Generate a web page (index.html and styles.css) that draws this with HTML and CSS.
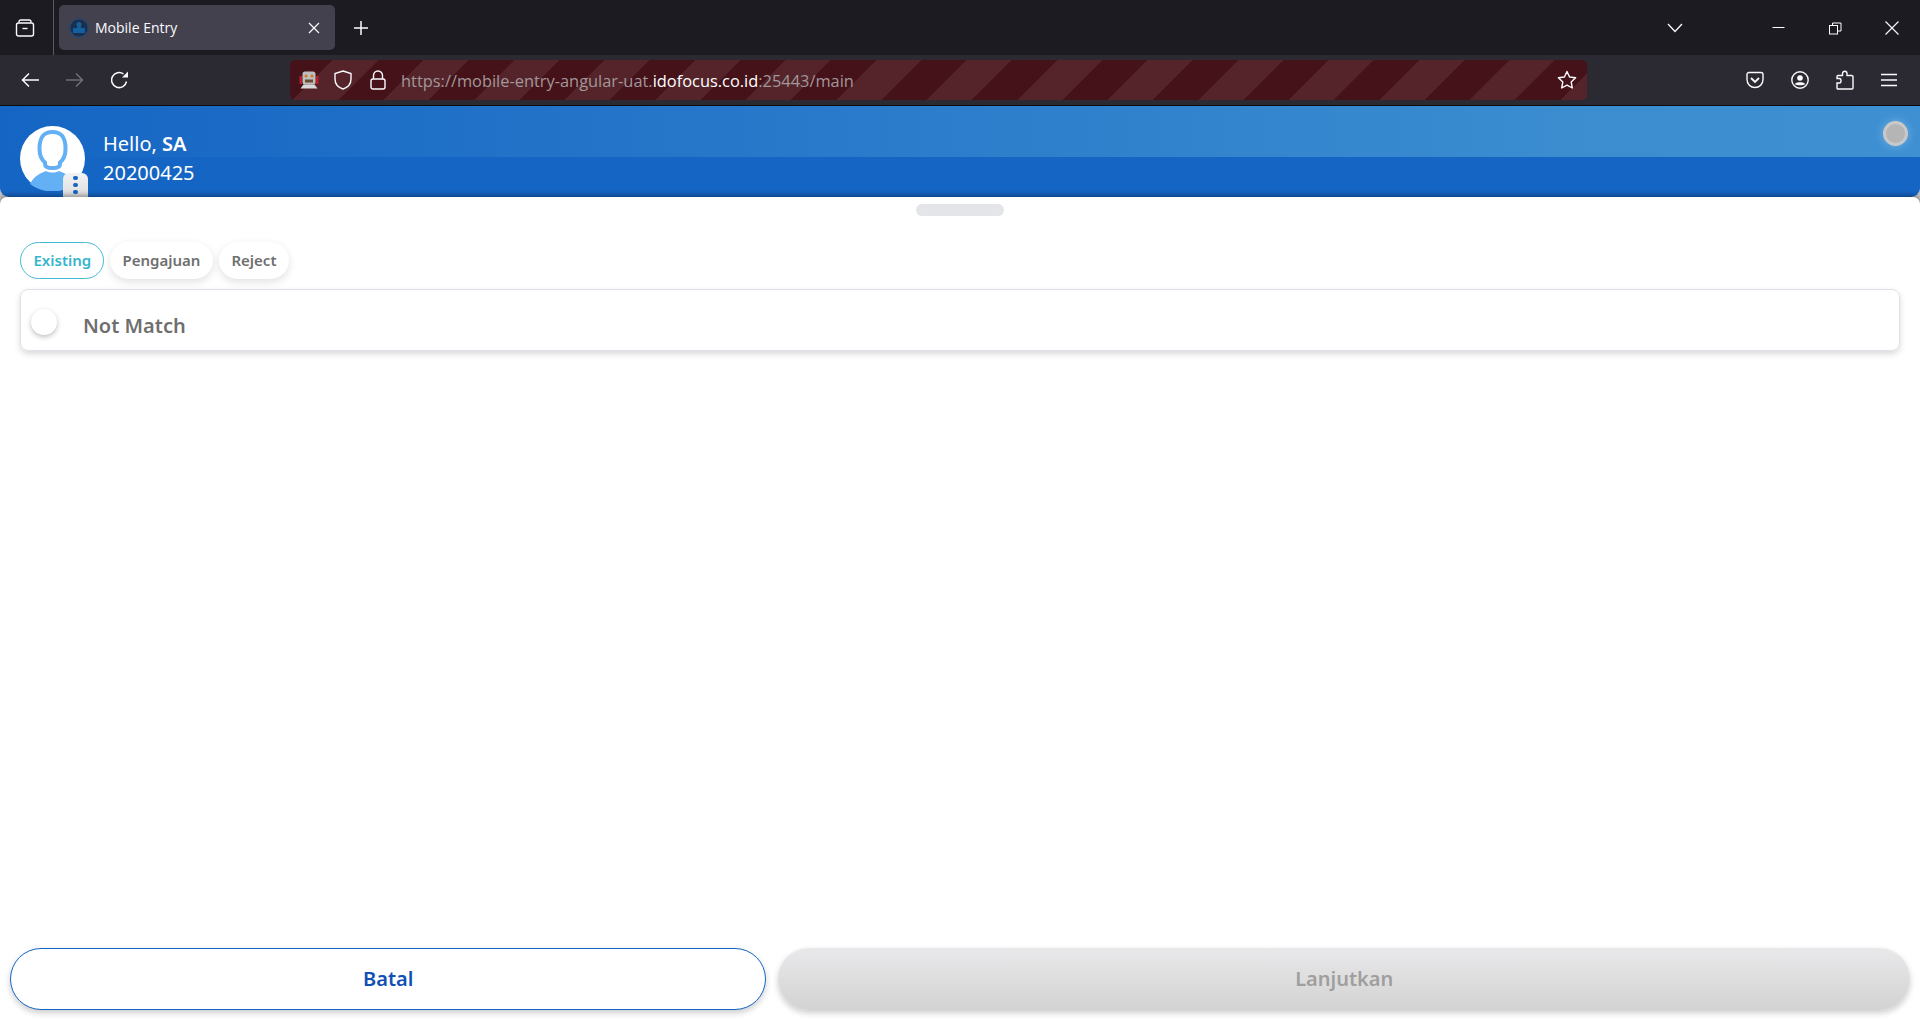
FILE: index.html
```html
<!DOCTYPE html>
<html>
<head>
  <title>Mobile Entry</title>
  <link rel="stylesheet" href="styles.css">
</head>
<body>
  <!-- browser chrome -->
  <div class="tabbar">
    <div class="tab-list-btn">
      <svg width="20" height="20" viewBox="0 0 20 20" fill="none" stroke="#fbfbfe" stroke-width="1.4"><path d="M4 4.5V3.800C4 2.800 4.800 2 5.800 2H14.200C15.200 2 16 2.800 16 3.800V4.500"/><rect x="1.500" y="5" width="17" height="13" rx="2"/><path d="M7.500 10.500H12.500"/></svg>
    </div>
    <div class="tab">
      <svg class="favicon" width="20" height="20" viewBox="0 0 20 20"><circle cx="10" cy="10" r="9" fill="#1c2f4a" stroke="#134a88"/><circle cx="10" cy="6.500" r="2.500" fill="#14609f"/><path d="M4 15V10H8V8.500H12V10H16V15Z" fill="#14609f"/></svg>
      <span class="tab-title">Mobile Entry</span>
      <svg class="tab-close" width="12" height="12" viewBox="0 0 12 12" stroke="#fbfbfe" stroke-width="1.200"><path d="M1 1L11 11M11 1L1 11"/></svg>
    </div>
    <svg class="new-tab" width="16" height="16" viewBox="0 0 16 16" stroke="#fbfbfe" stroke-width="1.500"><path d="M8 1V15M1 8H15"/></svg>
    <div class="tabbar-right">
      <svg class="all-tabs" width="16" height="10" viewBox="0 0 16 10" fill="none" stroke="#fbfbfe" stroke-width="1.300"><path d="M1 1L8 8.500L15 1"/></svg>
      <div class="win-btn"><svg width="13" height="13" viewBox="0 0 13 13" stroke="#fbfbfe"><path d="M0.500 5.500H12.500"/></svg></div>
      <div class="win-btn"><svg width="13" height="13" viewBox="0 0 13 13" fill="none" stroke="#fbfbfe"><rect x="0.500" y="3.500" width="8" height="8.500"/><path d="M3.500 3.500V1H12V9H8.500"/></svg></div>
      <div class="win-btn"><svg width="14" height="14" viewBox="0 0 14 14" stroke="#fbfbfe" stroke-width="1.100"><path d="M0.500 0.500L13.500 13.500M13.500 0.500L0.500 13.500"/></svg></div>
    </div>
  </div>

  <div class="navbar">
    <svg class="nav-icon" width="18" height="16" viewBox="0 0 18 16" fill="none" stroke="#fbfbfe" stroke-width="1.500"><path d="M18 8H2M8 1.500L1.500 8L8 14.500"/></svg>
    <svg class="nav-icon fwd" width="18" height="16" viewBox="0 0 18 16" fill="none" stroke="#6f6e75" stroke-width="1.500"><path d="M0 8H16M10 1.500L16.500 8L10 14.500"/></svg>
    <svg class="nav-icon reload" width="18" height="18" viewBox="0 0 18 18" fill="none" stroke="#fbfbfe" stroke-width="1.500"><path d="M15.500 10.500A7.500 7.500 0 1 1 12.500 3"/><path d="M17 0.500V6.500H11Z" fill="#fbfbfe" stroke="none"/></svg>

    <div class="urlbar">
      <svg class="robot" width="20" height="20" viewBox="0 0 20 20"><path d="M0.500 6H3V14H0.500ZM17 6H19.500V14H17Z" fill="#b3202c"/><rect x="3.500" y="1.500" width="13" height="13" rx="2.500" fill="#bdbdbd"/><circle cx="7" cy="6" r="1.500" fill="#d9761f"/><circle cx="13" cy="6" r="1.500" fill="#d9761f"/><rect x="6" y="9.500" width="8" height="3" fill="#6b4a30"/><path d="M1.500 18.500L4.500 14.500H15.500L18.500 18.500Z" fill="#d8d8d8"/></svg>
      <svg class="shield" width="18" height="20" viewBox="0 0 18 20" fill="none" stroke="#fbfbfe" stroke-width="1.400"><path d="M9 1L17 3.500V9C17 14 13.500 17.500 9 19C4.500 17.500 1 14 1 9V3.500Z"/></svg>
      <svg class="lock" width="16" height="20" viewBox="0 0 16 20" fill="none" stroke="#fbfbfe" stroke-width="1.400"><rect x="1" y="9" width="14" height="10" rx="2"/><path d="M3.500 9V5.500A4.500 4.500 0 0 1 12.500 5.500V9"/></svg>
      <span class="url">https://mobile-entry-angular-uat.<b>idofocus.co.id</b>:25443/main</span>
      <svg class="star" width="20" height="20" viewBox="0 0 20 20" fill="none" stroke="#fbfbfe" stroke-width="1.400" stroke-linejoin="round"><path d="M10 1.500L12.600 7L18.600 7.800L14.200 12L15.300 18L10 15.100L4.700 18L5.800 12L1.400 7.800L7.400 7Z"/></svg>
    </div>

    <div class="nav-right">
      <svg width="18" height="18" viewBox="0 0 18 18" fill="none" stroke="#fbfbfe" stroke-width="1.400"><path d="M1 3.500C1 2.500 1.700 1.500 3 1.500H15C16.300 1.500 17 2.500 17 3.500V8.500C17 13 13.500 16.500 9 16.500C4.500 16.500 1 13 1 8.500Z"/><path d="M5 7L9 11L13 7" stroke-width="1.800"/></svg>
      <svg width="18" height="18" viewBox="0 0 18 18" fill="none" stroke="#fbfbfe" stroke-width="1.400"><circle cx="9" cy="9" r="8.200"/><circle cx="9" cy="7" r="2.800" fill="#fbfbfe" stroke="none"/><path d="M3.800 13C5 10.800 13 10.800 14.200 13C13 14.800 5 14.800 3.800 13Z" fill="#fbfbfe" stroke="none"/></svg>
      <svg width="18" height="20" viewBox="0 0 18 20" fill="none" stroke="#fbfbfe" stroke-width="1.400"><path d="M1 13H3.500C5.500 13 5.500 8.500 3.500 8.500H1V6.500C1 6 1.500 5.500 2 5.500H6.500V3.500C6.500 0.500 11 0.500 11 3.500V5.500H15.500C16.200 5.500 17 6 17 6.500V18C17 18.500 16.500 19 16 19H2C1.500 19 1 18.500 1 18Z"/></svg>
      <svg width="16" height="14" viewBox="0 0 16 14" stroke="#fbfbfe" stroke-width="1.400"><path d="M0 1.500H16M0 7H16M0 12.500H16"/></svg>
    </div>
  </div>

  <!-- app -->
  <div class="app">
    <header class="app-header">
      <div class="header-band"></div>
      <div class="avatar-wrap">
        <svg class="avatar" width="65" height="65" viewBox="0 0 65 65">
          <circle cx="32.500" cy="32.500" r="32.500" fill="#fff"/>
          <path d="M10 58C14 49 22 47 26 45C30 47 35 47 39 45C43 47 51 49 55 58C42 68 23 68 10 58Z" fill="#64b0f4"/>
          <path d="M32.500 6C21.500 6 19.500 14 19.500 23C19.500 30 22 34 25 36.500V38C25 41 28 42 32.500 42C37 42 40 41 40 38V36.500C43 34 45.500 30 45.500 23C45.500 14 43.500 6 32.500 6Z" fill="#fff" stroke="#64b0f4" stroke-width="4"/>
        </svg>
        <div class="avatar-menu"><i></i><i></i><i></i></div>
      </div>
      <div class="user-info">
        <div class="hello">Hello, <b>SA</b></div>
        <div class="nik">20200425</div>
      </div>
      <div class="status-dot"></div>
    </header>

    <main class="sheet">
      <div class="handle"></div>
      <div class="chips">
        <button class="chip chip-active">Existing</button>
        <button class="chip">Pengajuan</button>
        <button class="chip">Reject</button>
      </div>
      <div class="option-card">
        <span class="radio"></span>
        <span class="option-label">Not Match</span>
      </div>
      <div class="actions">
        <button class="btn btn-cancel">Batal</button>
        <button class="btn btn-next">Lanjutkan</button>
      </div>
    </main>
  </div>
</body>
</html>
```

FILE: styles.css
```css
* {
  box-sizing: border-box;
}

body {
  display: flex;
  flex-direction: column;
  height: 100vh;
  margin: 0;
  overflow: hidden;
  background: #fff;
  font-family: 'Noto Sans', sans-serif;
}

svg {
  display: block;
  flex-shrink: 0;
}

/* Browser chrome */
.tabbar {
  display: flex;
  align-items: center;
  height: 55px;
  background: #1c1b22;
  font-family: 'Open Sans', sans-serif;
}

.tab-list-btn {
  display: flex;
  align-items: center;
  justify-content: center;
  width: 54px;
  height: 100%;
  padding-right: 4px;
  border-right: 1px solid #5a5960;
}

.tab {
  display: flex;
  align-items: center;
  width: 276px;
  height: 45px;
  margin-left: 5px;
  padding: 0 15px 0 10px;
  background: #42414d;
  border-radius: 5px;
  color: #fbfbfe;
  font-size: 14px;
}

.favicon {
  margin-right: 6px;
}

.tab-title {
  flex: 1;
}

.new-tab {
  margin-left: 18px;
}

.tabbar-right {
  display: flex;
  align-items: center;
  margin-left: auto;
  padding-top: 1px;
}

.all-tabs {
  margin-right: 68px;
}

.win-btn {
  display: flex;
  justify-content: center;
  width: 56.500px;
}

.navbar {
  display: flex;
  align-items: center;
  height: 51px;
  padding-left: 21px;
  background: #2b2a33;
  border-bottom: 1px solid #0c0c0d;
}

.nav-icon {
  margin-right: 27px;
}

.nav-icon.reload {
  margin-right: 0;
}

.urlbar {
  display: flex;
  align-items: center;
  width: 1297px;
  height: 40px;
  margin-left: 161px;
  padding: 0 10px 0 9px;
  border-radius: 5px;
  background: repeating-linear-gradient(-45deg, #54242a 0, #54242a 19px, #451219 19px, #451219 51px, #54242a 51px, #54242a 64px);
  font-family: 'Open Sans', sans-serif;
}

.shield {
  margin-left: 15px;
}

.lock {
  margin-left: 18px;
}

.url {
  flex: 1;
  margin-left: 15px;
  color: #a3979a;
  font-size: 16.400px;
}

.url b {
  color: #fff;
  font-weight: 400;
}

.nav-right {
  display: flex;
  align-items: center;
  gap: 27px;
  margin-left: 159px;
}

/* App header */
.app {
  display: flex;
  flex: 1;
  flex-direction: column;
  min-height: 0;
  background: #c4c4c4;
}

.app-header {
  position: relative;
  display: flex;
  flex-shrink: 0;
  align-items: flex-start;
  height: 91px;
  padding: 20px 0 0 20px;
  background: #1565c4;
  border-radius: 0 0 9px 9px;
  color: #fff;
}

.header-band {
  position: absolute;
  top: 0;
  left: 0;
  right: 0;
  height: 51px;
  background: linear-gradient(90deg, #1565c4 0%, #3b8dd0 82%, #3e90d3 100%);
}

.avatar-wrap {
  position: relative;
  width: 65px;
  height: 65px;
}

.avatar-menu {
  position: absolute;
  top: 47px;
  left: 43px;
  display: flex;
  flex-direction: column;
  align-items: center;
  justify-content: center;
  gap: 2.500px;
  width: 25px;
  height: 24px;
  background: linear-gradient(#f2f2f2, #dedede);
  border-radius: 6px 6px 0 0;
}

.avatar-menu i {
  width: 4.500px;
  height: 4.500px;
  background: #1565c4;
  border-radius: 50%;
}

.user-info {
  position: relative;
  margin-left: 18px;
  padding-top: 3px;
  font-size: 20px;
  line-height: 29px;
}

.hello b {
  font-weight: 600;
}

.status-dot {
  position: absolute;
  top: 15px;
  right: 12px;
  width: 25px;
  height: 25px;
  background: #b5b5b5;
  border: 3px solid #c9c9c9;
  border-radius: 50%;
  box-shadow: 0 0 10px rgba(255, 255, 255, 0.3);
}

/* Sheet */
.sheet {
  position: relative;
  display: flex;
  flex: 1;
  flex-direction: column;
  min-height: 0;
  padding: 7px 20px 0;
  background: #fff;
  border-radius: 7px 7px 0 0;
  box-shadow: 0 -2px 5px rgba(0, 0, 0, 0.35);
}

.handle {
  align-self: center;
  width: 88px;
  height: 12px;
  background: #e4e5e8;
  border-radius: 6px;
}

.chips {
  display: flex;
  gap: 6px;
  margin-top: 26px;
}

.chip {
  height: 37px;
  padding: 0 12.500px 2px;
  background: #fff;
  border: none;
  border-radius: 19px;
  box-shadow: 0 3px 8px rgba(0, 0, 0, 0.12);
  color: #6f6f6f;
  font-family: 'Noto Sans', sans-serif;
  font-size: 15px;
  font-weight: 600;
}

.chip-active {
  width: 84px;
  border: 1px solid #45bcd2;
  box-shadow: none;
  color: #36b5cc;
}

.option-card {
  display: flex;
  align-items: flex-start;
  height: 62px;
  margin-top: 10px;
  padding: 22px 0 0 10px;
  border: 1px solid #dfe1e8;
  border-radius: 8px;
  box-shadow: 0 3px 6px rgba(0, 0, 0, 0.15);
}

.radio {
  width: 26px;
  height: 26px;
  margin-top: -3px;
  background: #fff;
  border-radius: 50%;
  box-shadow: 0 2px 5px rgba(0, 0, 0, 0.25);
}

.option-label {
  margin-left: 26px;
  color: #6f6f6f;
  font-size: 20px;
  font-weight: 600;
  line-height: 27px;
}

.actions {
  display: flex;
  gap: 12px;
  margin: auto -10px 10px;
}

.btn {
  height: 62px;
  padding: 0 0 2px;
  border-radius: 31px;
  font-family: 'Noto Sans', sans-serif;
  font-size: 20px;
  font-weight: 600;
}

.btn-cancel {
  flex: 2;
  background: #fff;
  border: 1px solid #1565c4;
  box-shadow: 0 3px 6px rgba(0, 0, 0, 0.2);
  color: #1150b5;
}

.btn-next {
  flex: 3;
  background: linear-gradient(#e9e8ea, #d3d3d3);
  border: none;
  box-shadow: 0 3px 6px rgba(0, 0, 0, 0.2);
  color: #9f9f9f;
}
```
